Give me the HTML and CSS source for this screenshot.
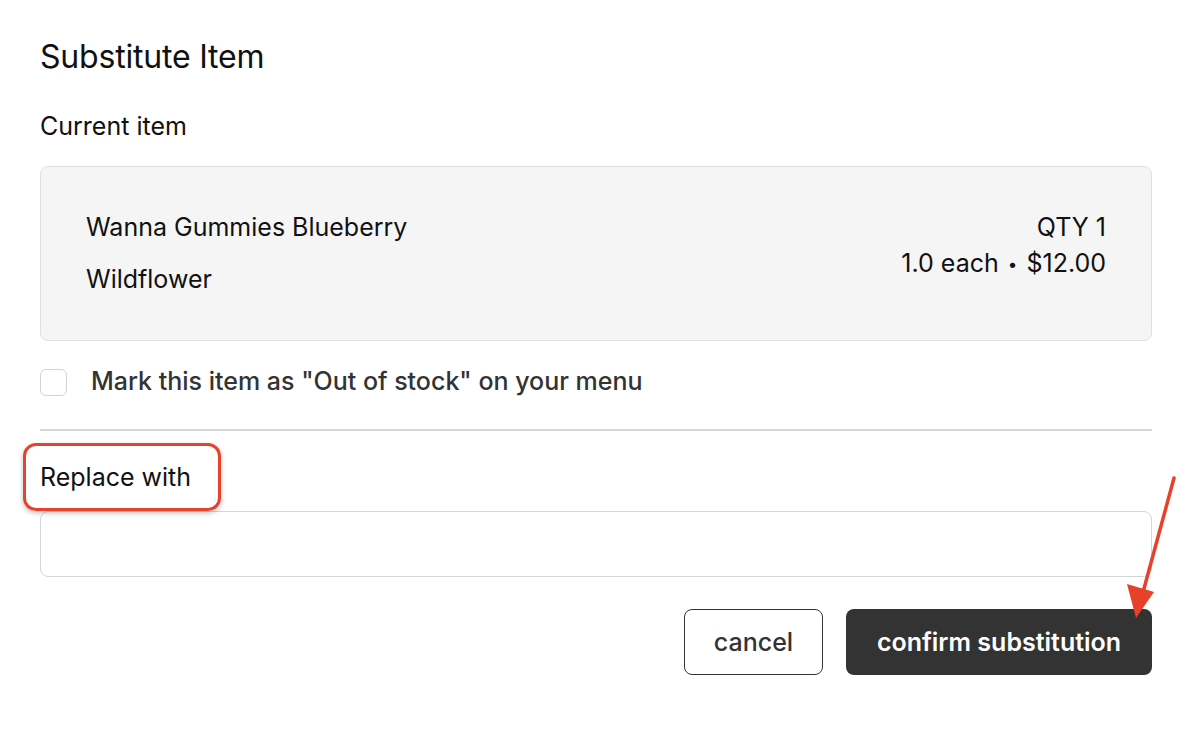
FILE: index.html
```html
<!DOCTYPE html>
<html>
<head>
<meta charset="utf-8">
<link rel="stylesheet" href="styles.css">
</head>
<body>
<div class="dialog">
  <h1 class="title">Substitute Item</h1>
  <div class="section-label">Current item</div>
  <div class="item-card">
    <div class="item-left">
      <div class="item-line">Wanna Gummies Blueberry</div>
      <div class="item-line">Wildflower</div>
    </div>
    <div class="item-right">
      <div class="item-meta">QTY 1</div>
      <div class="item-meta">1.0 each <span class="dot">•</span> $12.00</div>
    </div>
  </div>
  <label class="check-row">
    <span class="checkbox"></span>
    <span class="check-text">Mark this item as "Out of stock" on your menu</span>
  </label>
  <hr class="divider">
  <div class="replace-label"><span class="highlight"></span>Replace with</div>
  <div class="input-box"></div>
  <div class="actions">
    <button class="btn btn-cancel">cancel</button>
    <button class="btn btn-confirm">confirm substitution</button>
  </div>
  <svg class="arrow" width="70" height="170" viewBox="0 0 70 170">
    <line x1="54" y1="6" x2="22" y2="124" stroke="#e8412a" stroke-width="3.5" stroke-linecap="round"/>
    <polygon points="16,146 7,112 34,120" fill="#e8412a"/>
  </svg>
</div>
</body>
</html>
```
FILE: styles.css
```css
* { box-sizing: border-box; }
html, body { margin: 0; padding: 0; background: #ffffff; }
body {
  font-family: Inter, "Noto Sans", "Liberation Sans", sans-serif;
  color: #111111;
  width: 1188px;
  height: 730px;
  overflow: hidden;
}
.dialog {
  position: relative;
  padding: 40px 36px 0 40px;
  width: 1188px;
}
.title {
  margin: 0;
  font-size: 32px;
  font-weight: 400;
  line-height: 34px;
  letter-spacing: -0.2px;
}
.section-label {
  margin-top: 38px;
  font-size: 25px;
  line-height: 28px;
}
.item-card {
  margin-top: 26px;
  height: 175px;
  background: #f5f5f5;
  border: 1px solid #e0e0e0;
  border-radius: 8px;
  padding: 46px 45px 0 45px;
  display: flex;
  justify-content: space-between;
}
.item-left { display: flex; flex-direction: column; gap: 24px; }
.item-line { font-size: 25px; line-height: 28px; }
.item-right { display: flex; flex-direction: column; align-items: flex-end; gap: 8px; }
.item-meta { font-size: 25px; line-height: 28px; }
.dot { font-size: 17px; vertical-align: 2px; padding: 0 2px; }
.check-row {
  margin-top: 28px;
  display: flex;
  align-items: center;
  gap: 24px;
  height: 27px;
}
.checkbox {
  width: 27px;
  height: 27px;
  border: 1.5px solid #d2d2d2;
  border-radius: 6px;
  background: #fff;
  flex: none;
}
.check-text {
  font-size: 25px;
  font-weight: 500;
  color: #333333;
  line-height: 28px;
  margin-top: -3px;
}
.divider {
  margin: 33px 0 0 0;
  border: 0;
  border-top: 2px solid #d6d6d6;
}
.replace-label {
  position: relative;
  margin-top: 32px;
  font-size: 25px;
  line-height: 28px;
  width: max-content;
}
.highlight {
  position: absolute;
  left: -17px;
  top: -20px;
  width: 198px;
  height: 68px;
  border: 3.5px solid #e5432d;
  border-radius: 13px;
  box-shadow: 0 2px 5px rgba(0,0,0,0.25);
}
.input-box {
  margin-top: 20px;
  height: 66px;
  border: 1.5px solid #d4d6da;
  border-radius: 8px;
  background: #fff;
}
.actions {
  margin-top: 32px;
  display: flex;
  justify-content: flex-end;
  gap: 23px;
}
.btn {
  height: 66px;
  border-radius: 8px;
  font-family: Inter, "Noto Sans", "Liberation Sans", sans-serif;
  font-size: 25px;
  font-weight: 600;
  cursor: pointer;
}
.btn-cancel {
  width: 139px;
  background: #fff;
  color: #333;
  border: 1.5px solid #333;
  font-weight: 500;
}
.btn-confirm {
  width: 306px;
  background: #333333;
  color: #fff;
  border: 0;
}
.arrow {
  position: absolute;
  left: 1120px;
  top: 472px;
}
```
